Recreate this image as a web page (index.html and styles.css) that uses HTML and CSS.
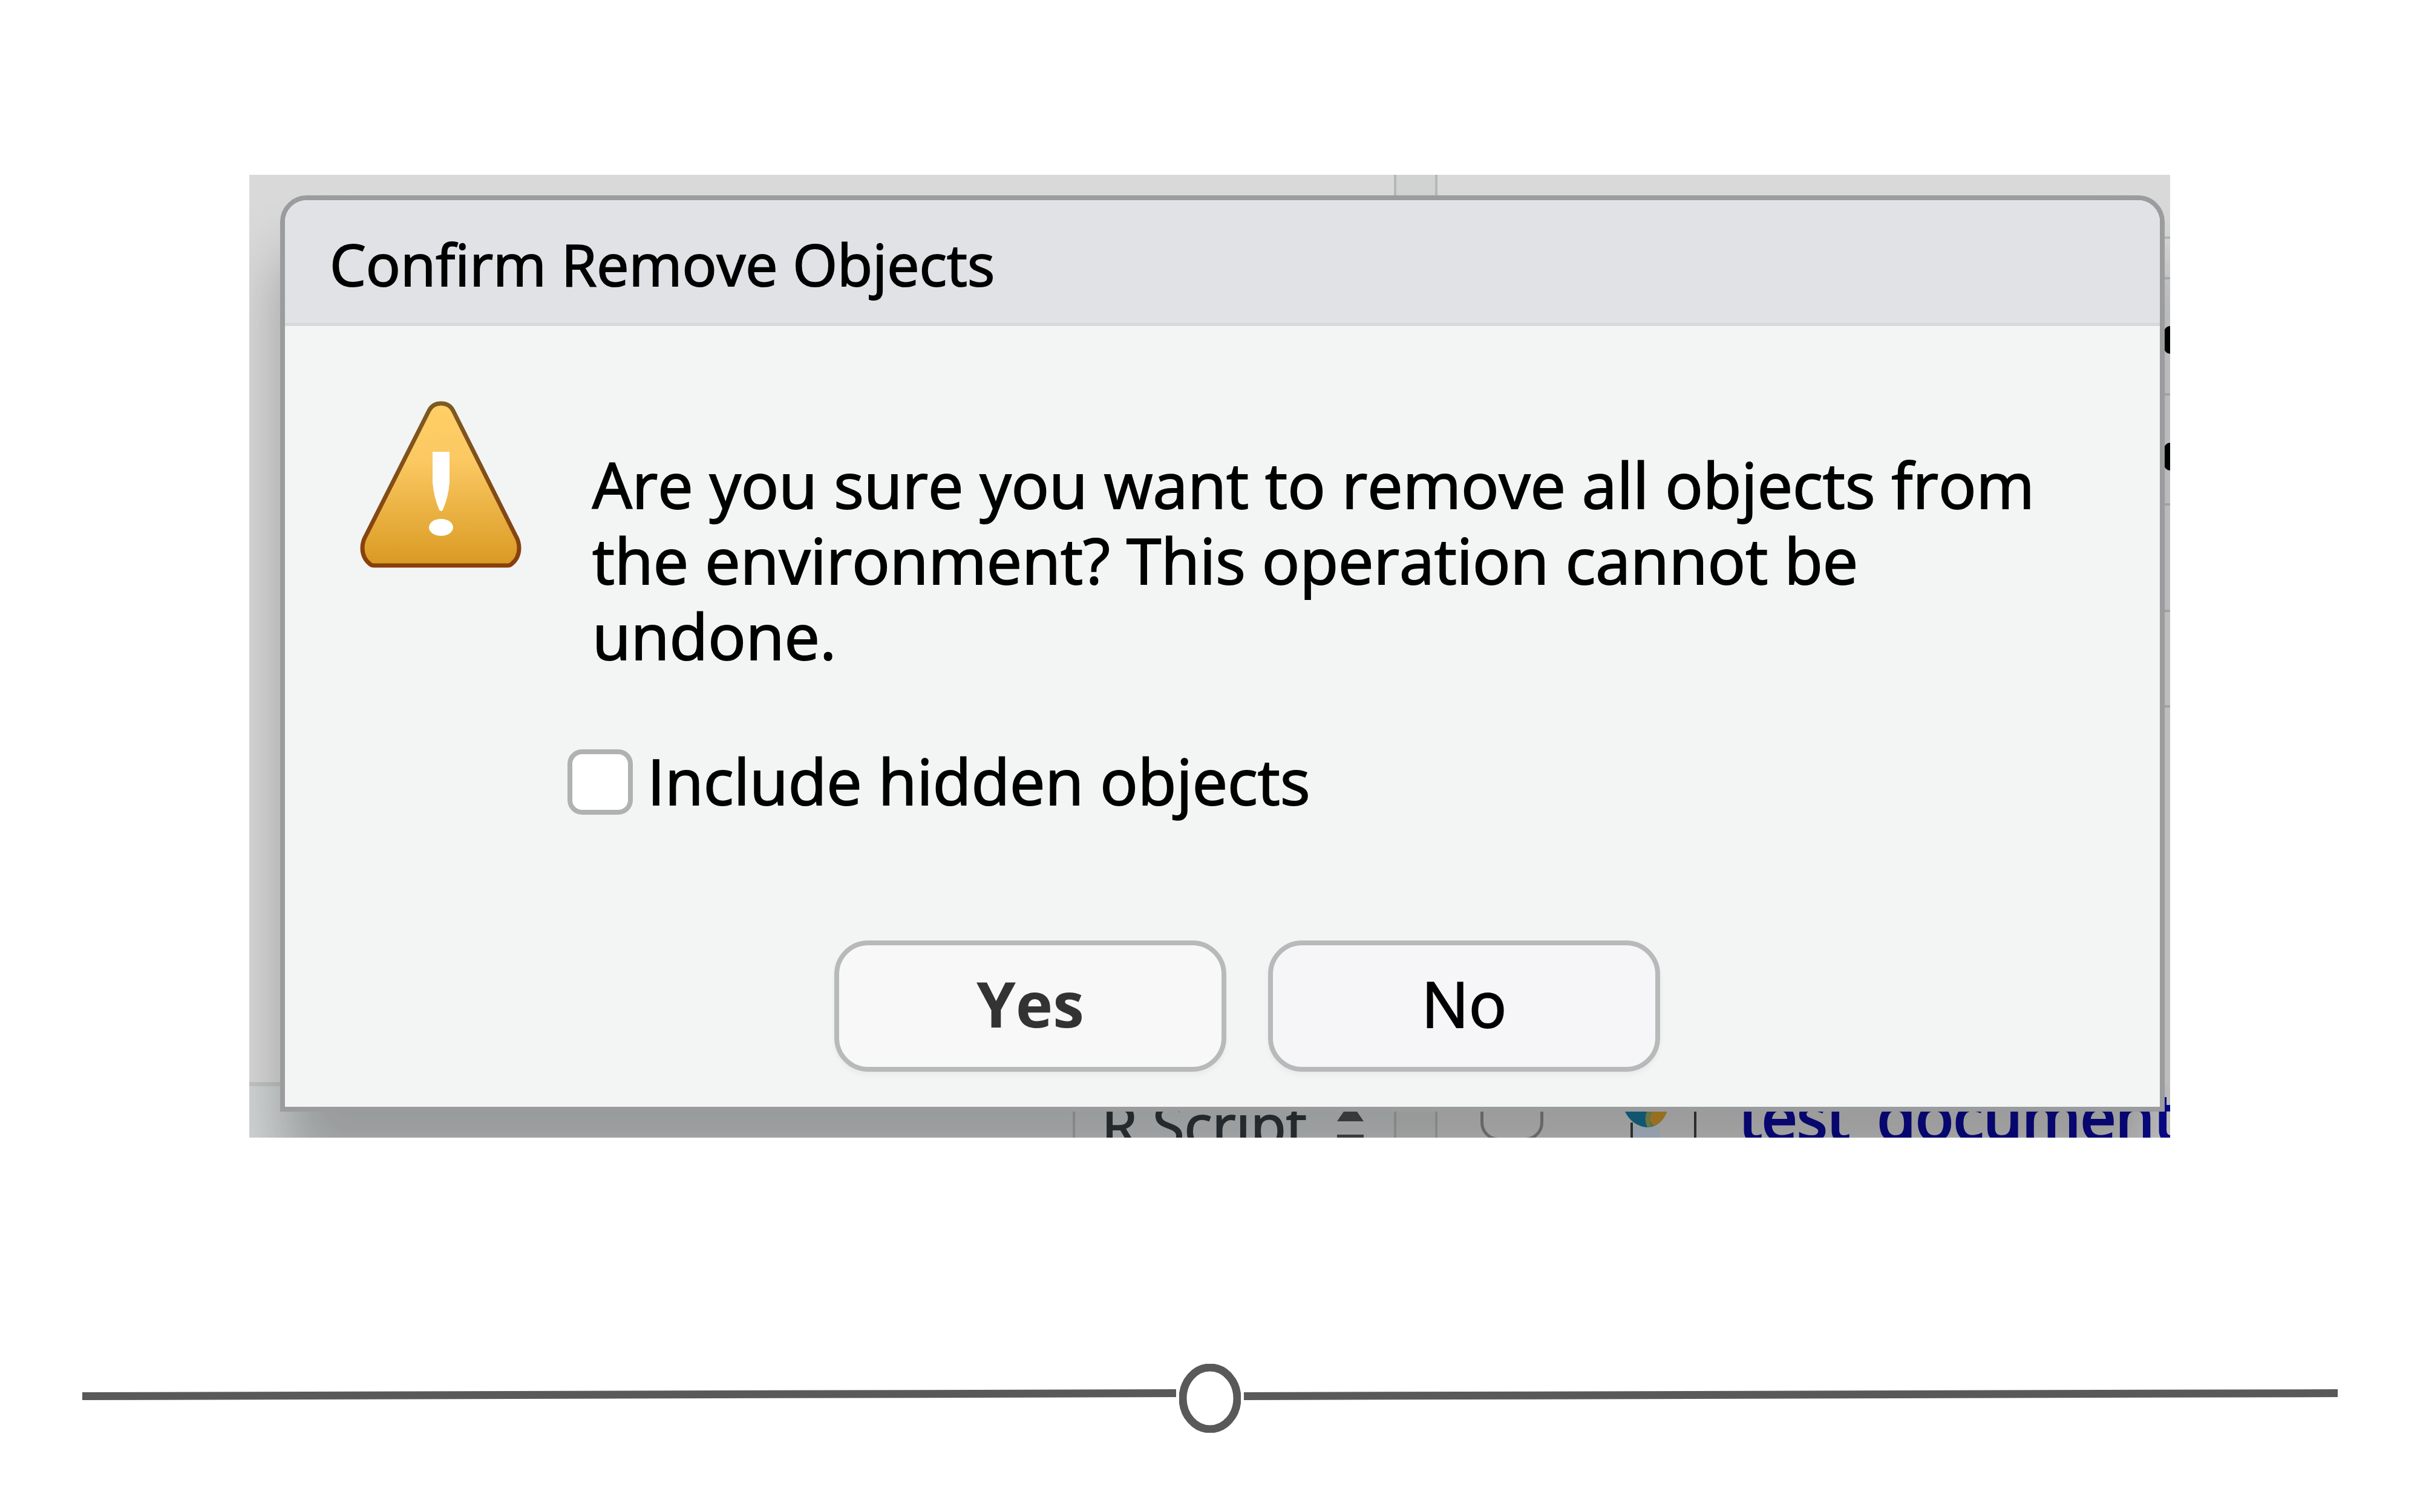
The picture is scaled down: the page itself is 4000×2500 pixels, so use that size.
FILE: index.html
```html
<!DOCTYPE html>
<html lang="en">
<head>
<meta charset="utf-8">
<title>Confirm Remove Objects</title>
<link rel="stylesheet" href="styles.css">
</head>
<body>
<main class="slide">
  <div class="frame">
    <div class="workspace">
      <section class="editor">
        <div class="editor-main"></div>
        <div class="status">
          <span class="status-type">R Script</span>
          <svg class="stepper" viewBox="0 0 44 85" aria-hidden="true"><path d="M22 26L44 58H0Z" fill="#4d4f50"/><path d="M0 80H44V85H0Z" fill="#4d4f50"/></svg>
        </div>
      </section>
      <div class="splitter"></div>
      <section class="panel">
        <div class="row row-tabs"></div>
        <div class="row row-tools"></div>
        <div class="row row-item"><i class="mark"></i></div>
        <div class="row row-item row-low"><i class="mark"></i></div>
        <div class="row row-item"></div>
        <div class="row row-last"></div>
        <div class="files">
          <input class="file-check" type="checkbox" aria-label="Select test_document">
          <svg class="file-icon" viewBox="0 0 120 85" aria-hidden="true">
            <path d="M12 60V85M117 40V85" stroke="#3c3c3c" stroke-width="4" fill="none"/>
            <path d="M14 67H58V85H14Z" fill="#c6d4e6"/>
            <path d="M0 40H71Q61 67 38 68Q12 66 0 40Z" fill="#17769b"/>
            <path d="M42 40H71Q64 61 47 66Q39 55 42 40Z" fill="#d0982c"/>
            <path d="M38 40H47Q39 57 46 66L38 68Q31 54 38 40Z" fill="#8fa05a"/>
          </svg>
          <a class="file-name" href="#">test_document</a>
        </div>
      </section>
    </div>

    <div class="dialog" role="dialog" aria-labelledby="dialog-title">
      <h1 class="dialog-title" id="dialog-title">Confirm Remove Objects</h1>
      <div class="dialog-body">
        <svg class="warning" viewBox="0 0 267 276" aria-hidden="true">
          <defs>
            <linearGradient id="amber" x1="0" y1="0" x2="0" y2="1">
              <stop offset="0" stop-color="#ffd066"/><stop offset=".35" stop-color="#fbc862"/><stop offset="1" stop-color="#d99a22"/>
            </linearGradient>
            <linearGradient id="edge" x1="0" y1="0" x2="0" y2="1">
              <stop offset="0" stop-color="#7d5a22"/><stop offset="1" stop-color="#883f0c"/>
            </linearGradient>
          </defs>
          <path d="M114 16Q120 4 134 4Q148 4 154 16L257 222Q263 232 263 243Q263 260 250 270Q248 272 244 272H23Q19 272 17 270Q4 260 4 243Q4 232 10 222Z" fill="url(#amber)" stroke="url(#edge)" stroke-width="7"/>
          <path d="M120 84H148V135Q146 159 137 180Q134 184 131 180Q122 159 120 135Z" fill="#fff"/>
          <ellipse cx="134" cy="209" rx="20" ry="14" fill="#fff"/>
        </svg>
        <div class="content">
          <p class="message">Are you sure you want to remove all objects from the environment? This operation cannot be undone.</p>
          <label class="option"><input class="option-box" type="checkbox">Include hidden objects</label>
        </div>
      </div>
      <div class="actions">
        <button class="button button-default" type="button">Yes</button>
        <button class="button" type="button">No</button>
      </div>
    </div>
  </div>

  <div class="divider">
    <svg class="divider-line" viewBox="0 0 1808 18" preserveAspectRatio="none" aria-hidden="true"><path d="M0 5L1808 0V13L0 18Z" fill="#595959"/></svg>
    <svg class="divider-ring" viewBox="0 0 102 114" aria-hidden="true"><ellipse cx="51" cy="57" rx="45" ry="51" fill="none" stroke="#595959" stroke-width="13"/></svg>
    <svg class="divider-line" viewBox="0 0 1808 18" preserveAspectRatio="none" aria-hidden="true"><path d="M0 5L1808 0V13L0 18Z" fill="#595959"/></svg>
  </div>
</main>
</body>
</html>
```
FILE: styles.css
```css
* {
  box-sizing: border-box;
}

body {
  margin: 0;
  background: #fff;
  color: #000;
  font-family: "Open Sans", "Noto Sans", sans-serif;
  -webkit-text-stroke: 2px currentColor;
}

.slide {
  padding-top: 289px;
}

/* The dialog and the window behind it share one grid cell. */
.frame {
  display: grid;
  margin: 0 413px 0 412px;
  overflow: hidden;
  background: #d9d9d9;
}

.workspace,
.dialog {
  grid-area: 1 / 1;
  min-width: 0;
}

.workspace {
  display: flex;
  height: 0;
  min-height: 100%;
}

.editor {
  display: flex;
  flex: 1892 1 0;
  flex-direction: column;
  min-width: 0;
}

.editor-main {
  flex: 1;
}

.status {
  display: flex;
  justify-content: flex-end;
  gap: 50px;
  height: 92px;
  padding-right: 50px;
  overflow: hidden;
  border-top: 7px solid #c4c6c5;
  background: #d2d6d7;
}

.status-type {
  padding-left: 44px;
  border-left: 4px solid #b4b6b7;
  color: #32393d;
  font-size: 96px;
  line-height: 126px;
}

.stepper {
  flex: none;
  width: 44px;
  height: 85px;
}

.splitter {
  flex: none;
  width: 72px;
  border: solid #b4b8b6;
  border-width: 0 4px;
  background: #d0d3d1;
}

.panel {
  display: flex;
  flex: 1211 1 0;
  flex-direction: column;
  min-width: 0;
}

.row {
  display: flex;
  flex: none;
  align-items: center;
  justify-content: flex-end;
  border-bottom: 4px solid #b8babc;
}

.row-tabs {
  height: 106px;
}

.row-tools {
  height: 67px;
}

.row-item {
  height: 192px;
  padding-top: 12px;
  background: #d6d6d8;
}

.row-low {
  height: 182px;
  padding: 24px 0 0;
}

.row-item:nth-child(5) {
  height: 176px;
}

.row-last {
  height: 158px;
}

.mark {
  width: 10px;
  height: 46px;
  border-radius: 10px 0 0 10px;
  background: #000;
}

.files {
  display: flex;
  gap: 70px;
  height: 85px;
  margin-top: auto;
  padding-left: 71px;
  overflow: hidden;
  background: #d6d6d6;
}

.file-check {
  flex: none;
  width: 104px;
  height: 90px;
  margin: 0 64px 0 0;
  appearance: none;
  border: 5px solid #8b8b8b;
  border-radius: 30px;
}

.file-icon {
  flex: none;
  width: 120px;
  height: 85px;
}

.file-name {
  color: #0a0a96;
  font-size: 104px;
  line-height: 98px;
  text-decoration: none;
  -webkit-text-stroke-width: 4px;
}

.dialog {
  z-index: 1;
  margin: 34px 9px 43px 51px;
  border: 8px solid #9b9c9d;
  border-radius: 44px 44px 0 0;
  background: #f2f5f4;
  box-shadow: 0 100px 100px rgba(0, 0, 0, 0.28);
}

.dialog-title {
  margin: 0;
  padding: 8px 74px 0;
  border-bottom: 5px solid #d7d8da;
  border-radius: 36px 36px 0 0;
  background: #e1e2e6;
  font-size: 95px;
  font-weight: 400;
  line-height: 195px;
}

.dialog-body {
  display: flex;
  gap: 76px;
  padding: 124px 140px 0 124px;
}

.warning {
  flex: none;
  width: 267px;
  height: 276px;
}

.content {
  flex: 1;
  padding-top: 75px;
}

.message {
  margin: 0 0 126px;
  padding-left: 41px;
  font-size: 104px;
  line-height: 125px;
}

.option {
  display: flex;
  gap: 24px;
  font-size: 104px;
  line-height: 104px;
}

.option-box {
  flex: none;
  width: 108px;
  height: 108px;
  margin: 0;
  appearance: none;
  border: 8px solid #b0b1b1;
  border-radius: 24px;
  background: #fff;
}

.actions {
  display: flex;
  justify-content: center;
  gap: 69px;
  padding: 208px 0 58px 82px;
}

.button {
  width: 648px;
  height: 217px;
  padding: 0 0 10px;
  border: 8px solid #b8baba;
  border-radius: 56px;
  background: #f6f6f8;
  color: #000;
  font: 400 104px/125px "Open Sans", "Noto Sans", sans-serif;
  box-shadow: 0 6px 8px rgba(0, 0, 0, 0.04);
}

.button-default {
  background: #f8f8f8;
  color: #333;
  font-weight: 700;
  -webkit-text-stroke-width: 0;
}

.divider {
  display: flex;
  gap: 5px;
  padding: 374px 136px 131px;
}

.divider-line {
  flex: 1;
  min-width: 0;
  height: 18px;
  margin-top: 42px;
}

.divider-ring {
  flex: none;
  width: 102px;
  height: 114px;
}
```
